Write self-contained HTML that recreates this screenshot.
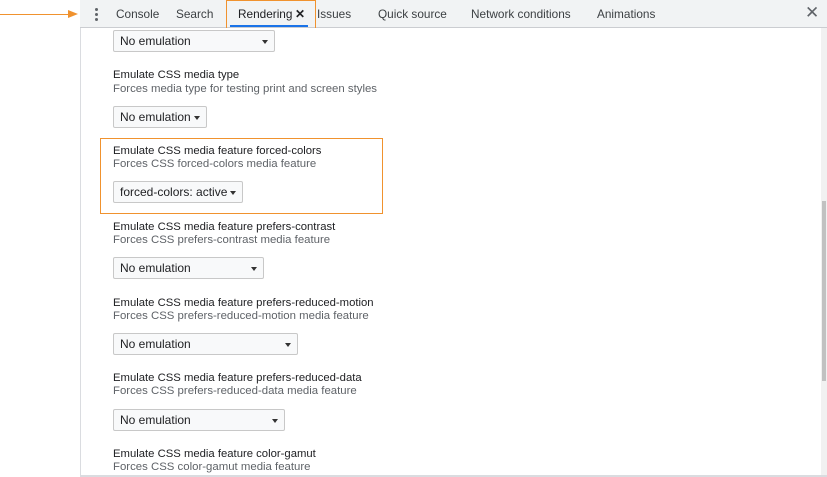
<!DOCTYPE html><html><head><style>
body{margin:0;width:827px;height:477px;background:#fff;font-family:"Liberation Sans",sans-serif;position:relative;overflow:hidden}
.a{position:absolute}
.tabs{left:80px;top:0;width:747px;height:27px;background:#f1f3f4;border-bottom:1px solid #cbcdd1}
.tab{position:absolute;top:7px;font-size:11.8px;color:#3c4043}
.panel{left:80px;top:28px;width:741px;height:449px;border-left:1px solid #dadce0;background:#fff}
.t{position:absolute;left:113px;font-size:11.3px;color:#202124;margin-top:1px}
.d{position:absolute;left:113px;font-size:11.4px;color:#5f6368;margin-top:1px}
.s{position:absolute;left:113px;height:22px;border:1px solid #c8c8c8;border-radius:2px;background:#f8f9fa;font-size:12px;color:#202124;box-sizing:border-box;line-height:21px;padding-left:6px}
.s:after{content:"";position:absolute;right:6px;top:9px;border-left:3px solid transparent;border-right:3px solid transparent;border-top:4px solid #333}
</style></head><body>
<div class="a" style="left:0;top:14px;width:70px;height:1px;background:#f0922e"></div>
<div class="a" style="left:68px;top:10px;border-left:10px solid #f0922e;border-top:4.5px solid transparent;border-bottom:4.5px solid transparent"></div>
<div class="a tabs">
<div class="a" style="left:15px;top:8px;width:3px;height:3px;background:#5f6368;border-radius:2px;box-shadow:0 5px 0 #5f6368,0 10px 0 #5f6368"></div>
<div class="tab" style="left:36px">Console</div>
<div class="tab" style="left:96px">Search</div>
<div class="tab" style="left:158px;color:#202124">Rendering</div>
<div class="tab" style="left:215px;color:#202124;font-size:12px;top:7px;font-weight:bold">✕</div>
<div class="a" style="left:150px;top:25px;width:78px;height:2px;background:#1a73e8"></div>
<div class="tab" style="left:237px">Issues</div>
<div class="tab" style="left:298px">Quick source</div>
<div class="tab" style="left:391px">Network conditions</div>
<div class="tab" style="left:517px">Animations</div>
<div class="tab" style="left:725px;font-size:17px;top:3px;color:#5f6368">✕</div>
</div>
<div class="a" style="left:226px;top:0;width:88px;height:31px;border:1px solid #f0922e"></div>
<div class="a panel"></div>
<div class="a" style="left:821px;top:28px;width:6px;height:449px;background:#f1f1f1"></div>
<div class="a" style="left:822px;top:201px;width:4px;height:180px;background:#c1c1c1"></div>
<div class="s" style="top:30px;width:162px">No emulation</div>
<div class="t" style="top:68px">Emulate CSS media type</div>
<div class="d" style="top:82px">Forces media type for testing print and screen styles</div>
<div class="s" style="top:106px;width:94px">No emulation</div>
<div class="a" style="left:100px;top:138px;width:281px;height:74px;border:1px solid #f0922e"></div>
<div class="t" style="top:144px">Emulate CSS media feature forced-colors</div>
<div class="d" style="top:157px">Forces CSS forced-colors media feature</div>
<div class="s" style="top:181px;width:130px">forced-colors: active</div>
<div class="t" style="top:220px">Emulate CSS media feature prefers-contrast</div>
<div class="d" style="top:233px">Forces CSS prefers-contrast media feature</div>
<div class="s" style="top:257px;width:151px">No emulation</div>
<div class="t" style="top:296px">Emulate CSS media feature prefers-reduced-motion</div>
<div class="d" style="top:309px">Forces CSS prefers-reduced-motion media feature</div>
<div class="s" style="top:333px;width:185px">No emulation</div>
<div class="t" style="top:371px">Emulate CSS media feature prefers-reduced-data</div>
<div class="d" style="top:384px">Forces CSS prefers-reduced-data media feature</div>
<div class="s" style="top:409px;width:172px">No emulation</div>
<div class="t" style="top:447px">Emulate CSS media feature color-gamut</div>
<div class="d" style="top:460px">Forces CSS color-gamut media feature</div>
<div class="a" style="left:80px;top:475px;width:747px;height:2px;background:#dadce0"></div>
</body></html>
